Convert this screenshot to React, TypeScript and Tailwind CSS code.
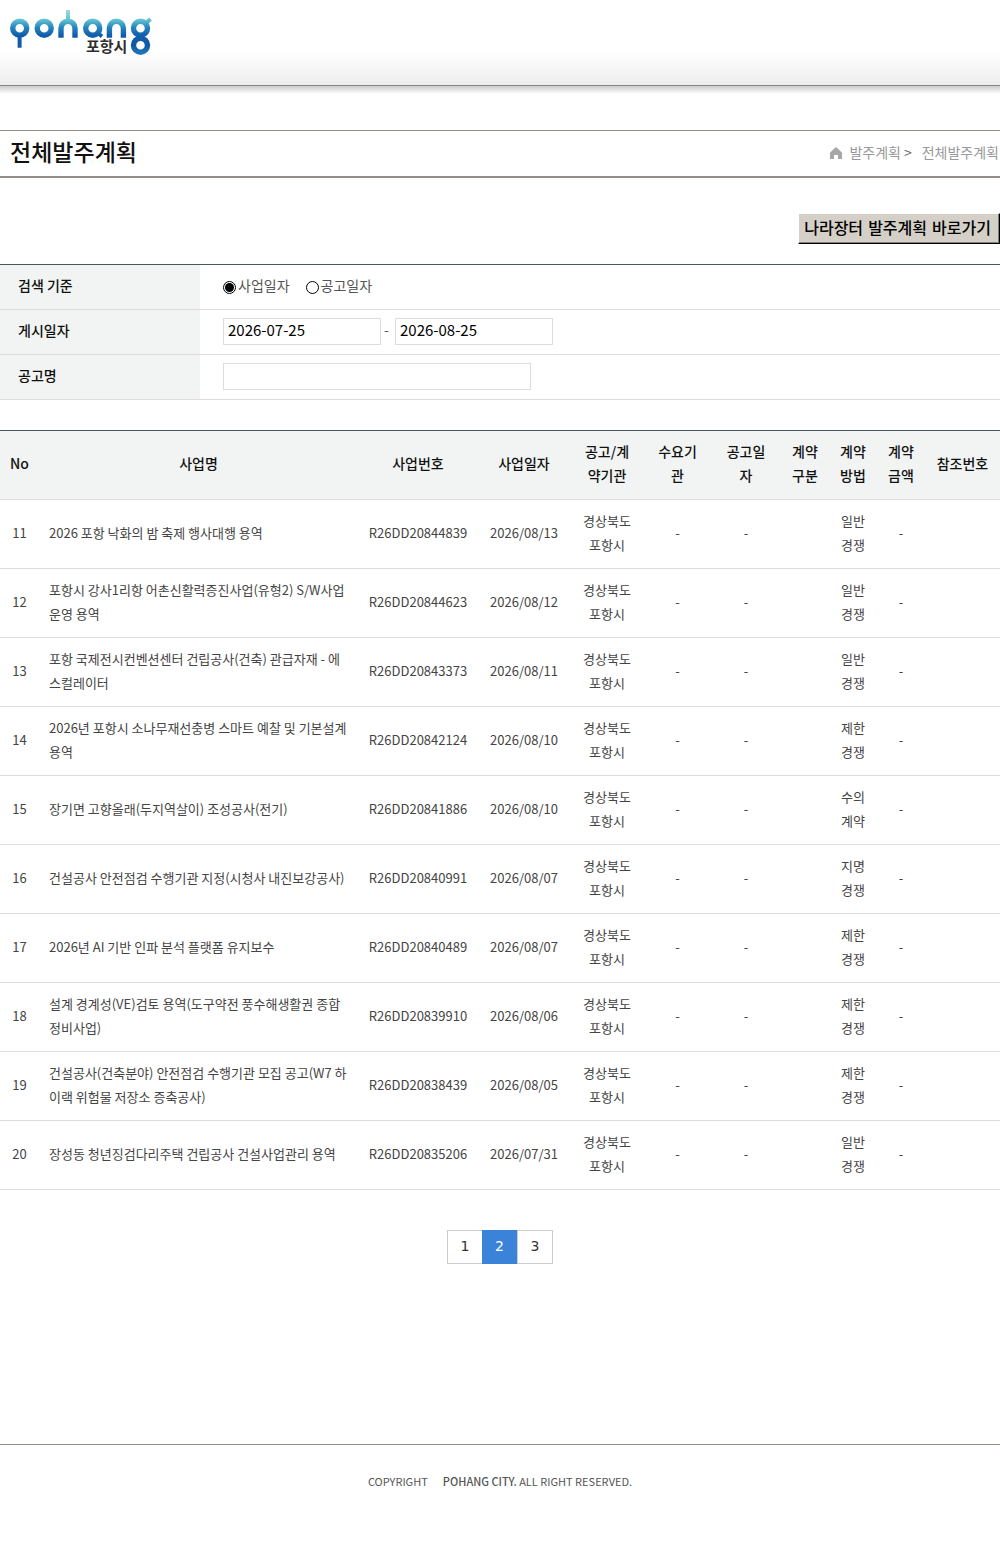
import { useState } from "react";

type Plan = {
  no: number;
  name: string;
  code: string;
  date: string;
  method: string;
};

const plans: Plan[] = [
  { no: 11, name: "2026 포항 낙화의 밤 축제 행사대행 용역", code: "R26DD20844839", date: "2026/08/13", method: "일반경쟁" },
  { no: 12, name: "포항시 강사1리항 어촌신활력증진사업(유형2) S/W사업 운영 용역", code: "R26DD20844623", date: "2026/08/12", method: "일반경쟁" },
  { no: 13, name: "포항 국제전시컨벤션센터 건립공사(건축) 관급자재 - 에스컬레이터", code: "R26DD20843373", date: "2026/08/11", method: "일반경쟁" },
  { no: 14, name: "2026년 포항시 소나무재선충병 스마트 예찰 및 기본설계 용역", code: "R26DD20842124", date: "2026/08/10", method: "제한경쟁" },
  { no: 15, name: "장기면 고향올래(두지역살이) 조성공사(전기)", code: "R26DD20841886", date: "2026/08/10", method: "수의계약" },
  { no: 16, name: "건설공사 안전점검 수행기관 지정(시청사 내진보강공사)", code: "R26DD20840991", date: "2026/08/07", method: "지명경쟁" },
  { no: 17, name: "2026년 AI 기반 인파 분석 플랫폼 유지보수", code: "R26DD20840489", date: "2026/08/07", method: "제한경쟁" },
  { no: 18, name: "설계 경계성(VE)검토 용역(도구약전 풍수해생활권 종합정비사업)", code: "R26DD20839910", date: "2026/08/06", method: "제한경쟁" },
  { no: 19, name: "건설공사(건축분야) 안전점검 수행기관 모집 공고(W7 하이랙 위험물 저장소 증축공사)", code: "R26DD20838439", date: "2026/08/05", method: "제한경쟁" },
  { no: 20, name: "장성동 청년징검다리주택 건립공사 건설사업관리 용역", code: "R26DD20835206", date: "2026/07/31", method: "일반경쟁" },
];

const columns = [
  { label: "No", width: "w-[39px]" },
  { label: "사업명", width: "" },
  { label: "사업번호", width: "w-[120px]" },
  { label: "사업일자", width: "w-[92px]" },
  { label: "공고/계약기관", width: "w-[74px]" },
  { label: "수요기관", width: "w-[67px]" },
  { label: "공고일자", width: "w-[70px]" },
  { label: "계약구분", width: "w-[48px]" },
  { label: "계약방법", width: "w-[48px]" },
  { label: "계약금액", width: "w-[48px]" },
  { label: "참조번호", width: "w-[75px]" },
];

function Logo() {
  return (
    <svg width="144" height="48" viewBox="0 0 144 48" role="img" aria-label="pohang 포항시">
      <defs>
        <linearGradient id="wave" gradientUnits="userSpaceOnUse" x1="0" y1="2" x2="0" y2="46">
          <stop offset="0" stopColor="#9bdcdf" />
          <stop offset="0.22" stopColor="#62c3d2" />
          <stop offset="0.4" stopColor="#2585bf" />
          <stop offset="0.58" stopColor="#125dab" />
          <stop offset="1" stopColor="#1258a5" />
        </linearGradient>
        <linearGradient id="ring" gradientUnits="userSpaceOnUse" x1="0" y1="27" x2="0" y2="47">
          <stop offset="0" stopColor="#1560ac" />
          <stop offset="0.5" stopColor="#0f57a6" />
          <stop offset="1" stopColor="#1f7dbd" />
        </linearGradient>
      </defs>
      <g fill="none" stroke="url(#wave)" strokeWidth="5.4">
        <circle cx="9.700" cy="20.200" r="7" />
        <circle cx="34.200" cy="20.200" r="7" />
        <path d="M51 29.800v-9.600a7 7 0 0 1 14 0v9.600" />
        <circle cx="82.700" cy="20.200" r="7" />
        <path d="M99.400 29.800v-9.600a7 7 0 0 1 14 0v9.600" />
        <circle cx="130.500" cy="20.200" r="7" />
      </g>
      <g fill="none" stroke="url(#wave)" strokeWidth="4">
        <path d="M9.600 28v11.800M58 14V2" />
        <path d="M86 23.500l6 5M135.500 15.500l5-4.500" />
      </g>
      <circle cx="130.500" cy="37.200" r="7" fill="none" stroke="url(#ring)" strokeWidth="5.4" />
      <text x="76" y="44" fontSize="15" fontWeight="700" fill="#2e2e2e">
        포항시
      </text>
    </svg>
  );
}

function Header() {
  return (
    <header>
      <div className="h-[86px] border-b border-[#878787] bg-linear-to-b from-white from-60% to-[#ededed] px-2.5 pt-2">
        <a href="#" className="inline-block">
          <Logo />
        </a>
      </div>
      <div className="h-2 bg-linear-to-b from-[#cccccc] to-white" />
    </header>
  );
}

function TitleBar() {
  return (
    <div className="mt-9 flex h-12 items-center justify-between border-t border-b-2 border-[#958e88] pr-px pb-1 pl-2.5">
      <h1 className="pb-0.5 text-[23px] leading-8 font-medium text-[#111111]">전체발주계획</h1>
      <nav className="flex items-center text-sm text-[#999999]">
        <svg className="mt-0.5 mr-[7px]" width="12" height="12" viewBox="0 0 12 12" fill="#a7a7a7" aria-hidden="true">
          <path d="M6 0 0 5.500V12h4V8h4v4h4V5.500z" />
        </svg>
        <a href="#">발주계획</a>
        <span className="mr-2.5 ml-[3px] text-[#666666]">&gt;</span>
        <a href="#">전체발주계획</a>
      </nav>
    </div>
  );
}

function SearchForm() {
  const [basis, setBasis] = useState("business");
  const [from, setFrom] = useState("2026-07-25");
  const [to, setTo] = useState("2026-08-25");
  const [keyword, setKeyword] = useState("");

  const row = "flex h-[45px] border-b border-[#dddddd]";
  const head = "flex w-[200px] items-center bg-[#f2f4f3] pb-1 pl-[18px] font-medium text-[#111111]";
  const box = "h-[27px] border border-[#dddddd] px-1 pb-[3px] text-[15px] text-black";
  const radio =
    "mt-1 mr-0.5 size-[13px] appearance-none rounded-full border border-black bg-clip-content p-px checked:bg-black";

  return (
    <form className="mt-5 border-t border-[#46595a] text-sm text-[#555555]">
      <div className={row} role="radiogroup" aria-labelledby="basis">
        <div id="basis" className={head}>검색 기준</div>
        <div className="flex items-center pb-1 pl-[23px]">
          <label className="mr-4 flex items-center">
            <input type="radio" name="basis" className={radio} checked={basis === "business"} onChange={() => setBasis("business")} />
            사업일자
          </label>
          <label className="flex items-center">
            <input type="radio" name="basis" className={radio} checked={basis === "notice"} onChange={() => setBasis("notice")} />
            공고일자
          </label>
        </div>
      </div>
      <div className={row}>
        <label htmlFor="from" className={head}>게시일자</label>
        <div className="flex items-center pb-0.5 pl-[23px]">
          <input id="from" type="text" className={`${box} w-[158px]`} value={from} onChange={(e) => setFrom(e.target.value)} />
          <span className="w-3.5 pr-[3px] pb-1 text-center">-</span>
          <input type="text" aria-label="게시일자 종료" className={`${box} w-[158px]`} value={to} onChange={(e) => setTo(e.target.value)} />
        </div>
      </div>
      <div className={row}>
        <label htmlFor="keyword" className={head}>공고명</label>
        <div className="flex items-center pb-0.5 pl-[23px]">
          <input id="keyword" type="text" className={`${box} w-[308px]`} value={keyword} onChange={(e) => setKeyword(e.target.value)} />
        </div>
      </div>
    </form>
  );
}

function PlanTable() {
  const cell = "px-2.5 pt-[9px] pb-[11px]";

  return (
    <table className="mt-[30px] w-full table-fixed border-t border-[#46595a] text-center text-[13px] leading-6 text-[#444444]">
      <thead className="bg-[#f2f4f3] text-sm leading-6 text-[#111111]">
        <tr className="h-[69px] border-b border-[#dddddd]">
          {columns.map((col) => (
            <th key={col.label} scope="col" className={`${col.width} px-2.5 pb-1 font-medium first:px-0 last:px-0`}>
              {col.label}
            </th>
          ))}
        </tr>
      </thead>
      <tbody>
        {plans.map((plan) => (
          <tr key={plan.no} className="h-[69px] border-b border-[#dddddd]">
            <td className="pt-[9px] pb-[11px]">{plan.no}</td>
            <td className={`${cell} text-left`}>
              <a href="#">{plan.name}</a>
            </td>
            <td className={cell}>{plan.code}</td>
            <td className={cell}>{plan.date}</td>
            <td className={cell}>경상북도 포항시</td>
            <td className={cell}>-</td>
            <td className={cell}>-</td>
            <td className={cell} />
            <td className={cell}>{plan.method}</td>
            <td className={cell}>-</td>
            <td className={cell} />
          </tr>
        ))}
      </tbody>
    </table>
  );
}

function Pagination() {
  const [page, setPage] = useState(2);

  return (
    <nav className="mt-10 flex justify-center font-['DejaVu_Sans',sans-serif] text-sm" aria-label="페이지">
      {[1, 2, 3].map((n) => (
        <button
          key={n}
          type="button"
          onClick={() => setPage(n)}
          className={
            n === page
              ? "h-[34px] w-[35px] bg-[#3b82d9] pb-0.5 text-white"
              : "h-[34px] w-9 border border-[#cccccc] pb-0.5 text-[#333333] first:w-[35px] first:border-r-0"
          }
        >
          {n}
        </button>
      ))}
    </nav>
  );
}

function App() {
  return (
    <div className="bg-white font-['Noto_Sans_CJK_KR',sans-serif]">
      <Header />
      <main>
        <TitleBar />
        <div className="mt-[35px] flex justify-end">
          <button
            type="button"
            className="h-[31px] border border-t-white border-r-black border-b-black border-l-white bg-[#d4d0c8] pr-2 pl-[5px] font-['DejaVu_Sans','Noto_Sans_CJK_KR',sans-serif] text-base leading-6 font-medium text-black shadow-[inset_-1px_-1px_0_#808080]"
          >
            나라장터 발주계획 바로가기
          </button>
        </div>
        <SearchForm />
        <PlanTable />
        <Pagination />
      </main>
      <footer className="mt-[180px] border-t border-[#958e88] pt-7 pb-14 text-center text-[11px] leading-4 text-[#555555]">
        <span className="mr-[15px]">COPYRIGHT</span>
        <strong className="font-medium">POHANG CITY.</strong> ALL RIGHT RESERVED.
      </footer>
    </div>
  );
}

export default App;
